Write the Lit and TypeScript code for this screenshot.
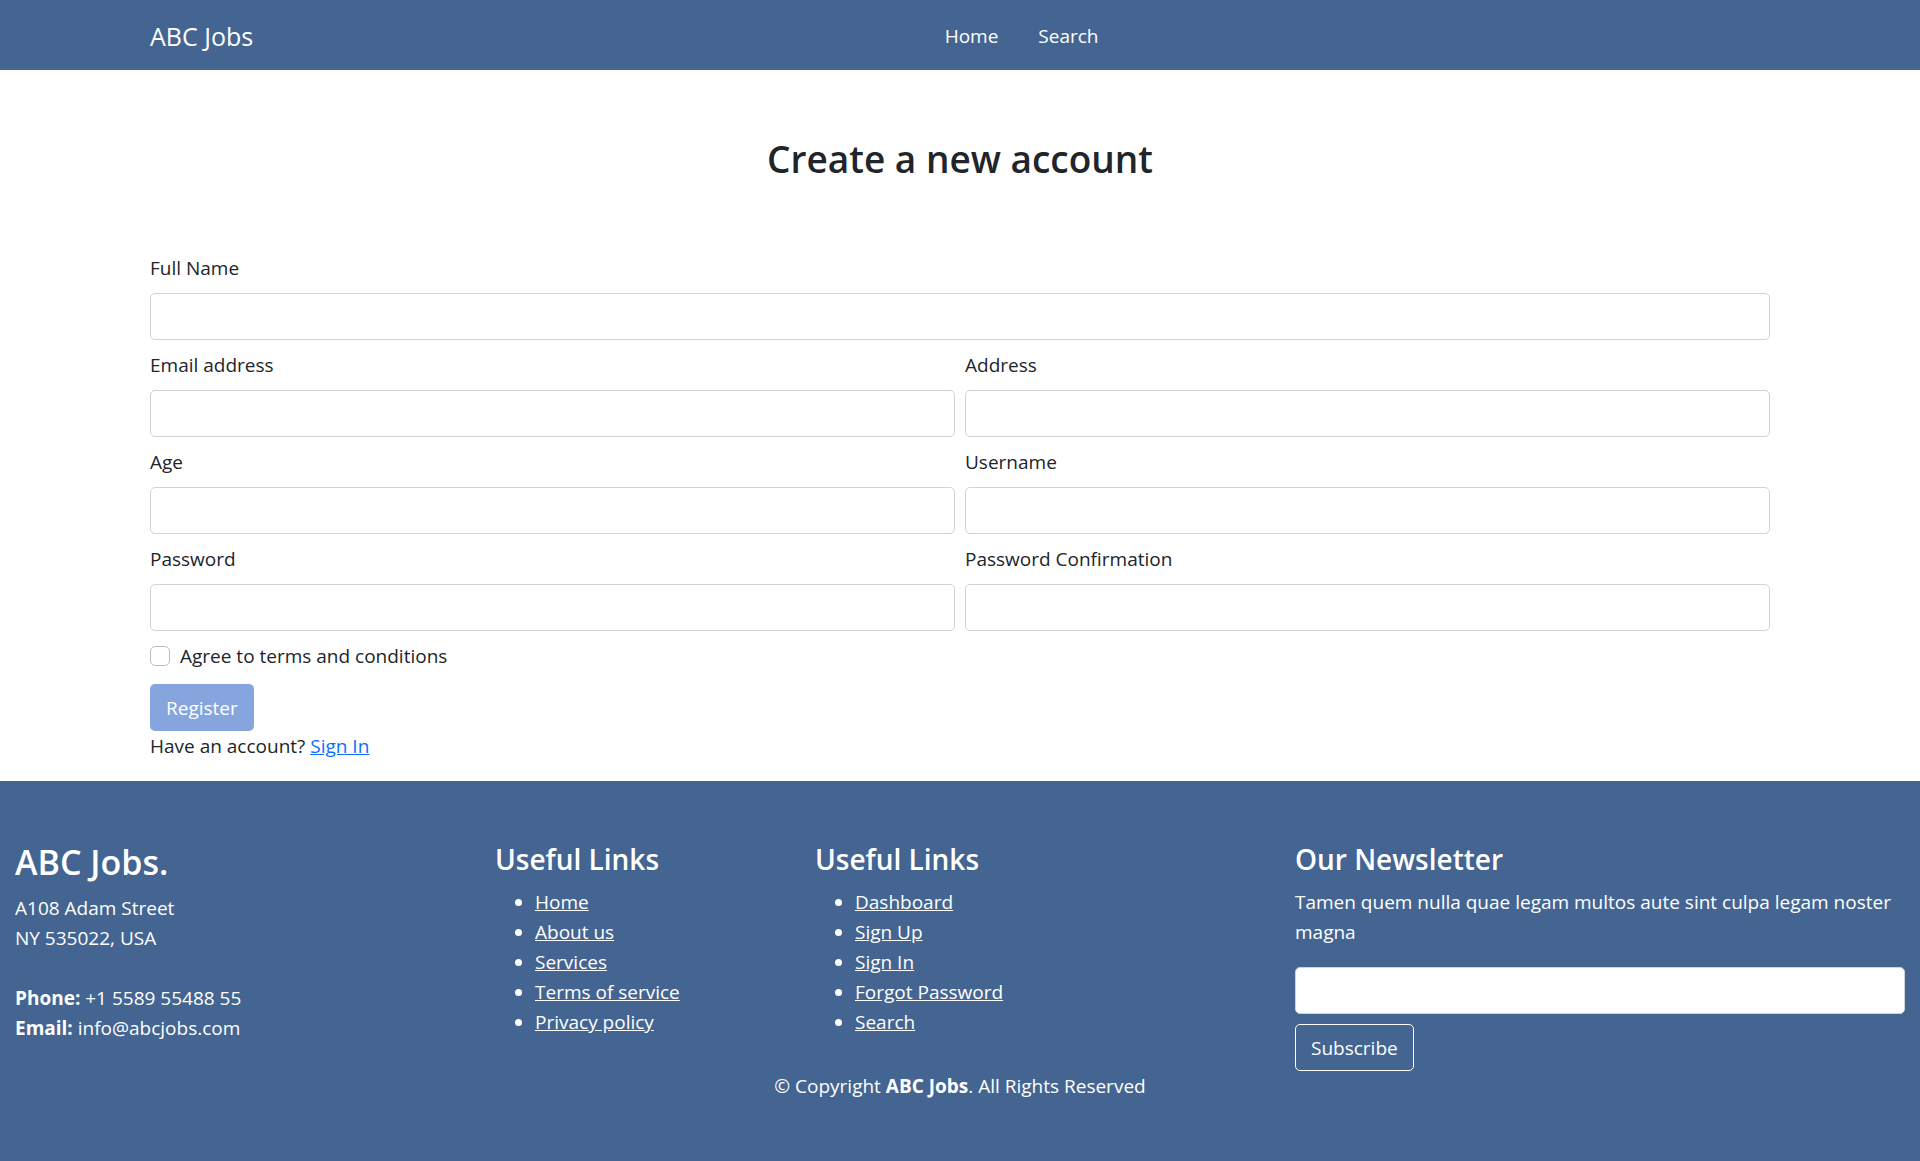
import { LitElement, html, css } from "lit";
import { customElement, property, state } from "lit/decorators.js";

const controls = css`
  * {
    box-sizing: border-box;
  }
  .input {
    display: block;
    width: 100%;
    height: 47px;
    padding: 8px 15px;
    border: 1px solid #ced4da;
    border-radius: 5px;
    background: #fff;
    color: #212529;
    font: inherit;
  }
  .input:focus {
    border-color: #86b7fe;
    outline: 3px solid rgba(13, 110, 253, 0.25);
  }
  .button {
    height: 47px;
    padding: 0 15px;
    border: 1px solid transparent;
    border-radius: 5px;
    color: #fff;
    font: inherit;
    cursor: pointer;
  }
`;

@customElement("site-header")
export class SiteHeader extends LitElement {
  static styles = css`
    :host {
      display: block;
      background: #446592;
    }
    .bar {
      display: flex;
      align-items: center;
      gap: 20px;
      max-width: 1650px;
      min-height: 70px;
      margin: 0 auto;
      padding: 2px 15px 0;
      box-sizing: border-box;
    }
    a {
      color: #fff;
      text-decoration: none;
    }
    .brand {
      font-size: 25px;
      line-height: 36px;
    }
    .menu {
      flex: 1;
      display: flex;
      justify-content: center;
      gap: 40px;
    }
  `;

  render() {
    return html`
      <header class="bar">
        <a class="brand" href="#">ABC Jobs</a>
        <nav class="menu">
          <a href="#">Home</a>
          <a href="#">Search</a>
        </nav>
      </header>
    `;
  }
}

interface Field {
  id: string;
  label: string;
  type: string;
  wide?: boolean;
}

const FIELDS: Field[] = [
  { id: "name", label: "Full Name", type: "text", wide: true },
  { id: "email", label: "Email address", type: "email" },
  { id: "address", label: "Address", type: "text" },
  { id: "age", label: "Age", type: "number" },
  { id: "username", label: "Username", type: "text" },
  { id: "password", label: "Password", type: "password" },
  { id: "confirm", label: "Password Confirmation", type: "password" },
];

@customElement("register-form")
export class RegisterForm extends LitElement {
  @state() private agreed = false;

  static styles = [
    controls,
    css`
      :host {
        display: block;
        max-width: 1650px;
        margin: 0 auto;
        padding: 65px 15px 20px;
        box-sizing: border-box;
      }
      .title {
        margin: 0 0 70px;
        font-size: 37px;
        font-weight: 600;
        line-height: 48px;
        text-align: center;
      }
      .fields {
        display: grid;
        grid-template-columns: repeat(2, minmax(0, 1fr));
        gap: 10px;
      }
      .field {
        display: grid;
        gap: 10px;
      }
      .wide {
        grid-column: 1 / -1;
      }
      .agree {
        display: flex;
        align-items: center;
        gap: 10px;
        margin: 10px 0 13px;
      }
      .check {
        appearance: none;
        width: 20px;
        height: 20px;
        margin: 0;
        border: 1px solid #bfbfbf;
        border-radius: 5px;
        background: #fff;
      }
      .check:checked {
        border-color: #0d6efd;
        background: #0d6efd;
      }
      .register {
        display: block;
        background: #0d4bbf;
      }
      .register:disabled {
        background: #86a5df;
        cursor: default;
      }
      .hint {
        margin: 0;
      }
      .link {
        color: #0d6efd;
      }
      @media (max-width: 700px) {
        .fields {
          grid-template-columns: minmax(0, 1fr);
        }
      }
    `,
  ];

  private toggle(e: Event) {
    this.agreed = (e.target as HTMLInputElement).checked;
  }

  render() {
    return html`
      <h1 class="title">Create a new account</h1>
      <form @submit=${(e: Event) => e.preventDefault()}>
        <div class="fields">
          ${FIELDS.map(
            (f) => html`
              <div class="field ${f.wide ? "wide" : ""}">
                <label for=${f.id}>${f.label}</label>
                <input class="input" id=${f.id} name=${f.id} type=${f.type} />
              </div>
            `,
          )}
        </div>
        <div class="agree">
          <input class="check" id="agree" type="checkbox" @change=${this.toggle} />
          <label for="agree">Agree to terms and conditions</label>
        </div>
        <button class="button register" type="submit" ?disabled=${!this.agreed}>Register</button>
      </form>
      <p class="hint">Have an account? <a class="link" href="#">Sign In</a></p>
    `;
  }
}

@customElement("link-list")
export class LinkList extends LitElement {
  @property() heading = "";
  @property({ attribute: false }) links: string[] = [];

  static styles = css`
    :host {
      display: block;
    }
    .heading {
      margin: 0 0 10px;
      font-size: 28px;
      font-weight: 600;
      line-height: 36px;
    }
    .list {
      margin: 0;
      padding-left: 40px;
    }
    a {
      color: #fff;
    }
  `;

  render() {
    return html`
      <h2 class="heading">${this.heading}</h2>
      <ul class="list">
        ${this.links.map((l) => html`<li><a href="#">${l}</a></li>`)}
      </ul>
    `;
  }
}

@customElement("site-footer")
export class SiteFooter extends LitElement {
  static styles = [
    controls,
    css`
      :host {
        display: block;
        padding: 60px 0;
        background: #446592;
        color: #fff;
      }
      .columns {
        display: grid;
        grid-template-columns: 3fr 2fr 3fr 4fr;
      }
      .column {
        min-width: 0;
        padding: 0 15px;
      }
      .brand,
      .heading {
        margin: 0 0 10px;
        font-weight: 600;
      }
      .brand {
        font-size: 34px;
        line-height: 42px;
      }
      .heading {
        font-size: 28px;
        line-height: 36px;
      }
      .text {
        margin: 0;
      }
      .contact {
        margin-top: 30px;
      }
      .newsletter {
        display: grid;
        justify-items: start;
        gap: 10px;
        margin-top: 20px;
      }
      .subscribe {
        border-color: #fff;
        background: transparent;
      }
      .copyright {
        padding: 0 15px;
        text-align: center;
      }
      @media (max-width: 1000px) {
        .columns {
          grid-template-columns: minmax(0, 1fr);
          row-gap: 30px;
        }
      }
    `,
  ];

  render() {
    return html`
      <footer>
        <div class="columns">
          <div class="column">
            <h2 class="brand">ABC Jobs.</h2>
            <p class="text">A108 Adam Street<br />NY 535022, USA</p>
            <p class="text contact">
              <strong>Phone:</strong> +1 5589 55488 55<br />
              <strong>Email:</strong> info@abcjobs.com
            </p>
          </div>
          <link-list
            class="column"
            heading="Useful Links"
            .links=${["Home", "About us", "Services", "Terms of service", "Privacy policy"]}
          ></link-list>
          <link-list
            class="column"
            heading="Useful Links"
            .links=${["Dashboard", "Sign Up", "Sign In", "Forgot Password", "Search"]}
          ></link-list>
          <div class="column">
            <h2 class="heading">Our Newsletter</h2>
            <p class="text">Tamen quem nulla quae legam multos aute sint culpa legam noster magna</p>
            <form class="newsletter" @submit=${(e: Event) => e.preventDefault()}>
              <input class="input" type="email" name="newsletter" aria-label="Newsletter email" />
              <button class="button subscribe" type="submit">Subscribe</button>
            </form>
          </div>
        </div>
        <div class="copyright">© Copyright <strong>ABC Jobs</strong>. All Rights Reserved</div>
      </footer>
    `;
  }
}

@customElement("app-root")
export class AppRoot extends LitElement {
  static styles = css`
    :host {
      display: block;
      background: #fff;
      color: #212529;
      font-family: "Segoe UI", "Open Sans", "Noto Sans", sans-serif;
      font-size: 19px;
      line-height: 30px;
    }
  `;

  render() {
    return html`
      <site-header></site-header>
      <register-form></register-form>
      <site-footer></site-footer>
    `;
  }
}
